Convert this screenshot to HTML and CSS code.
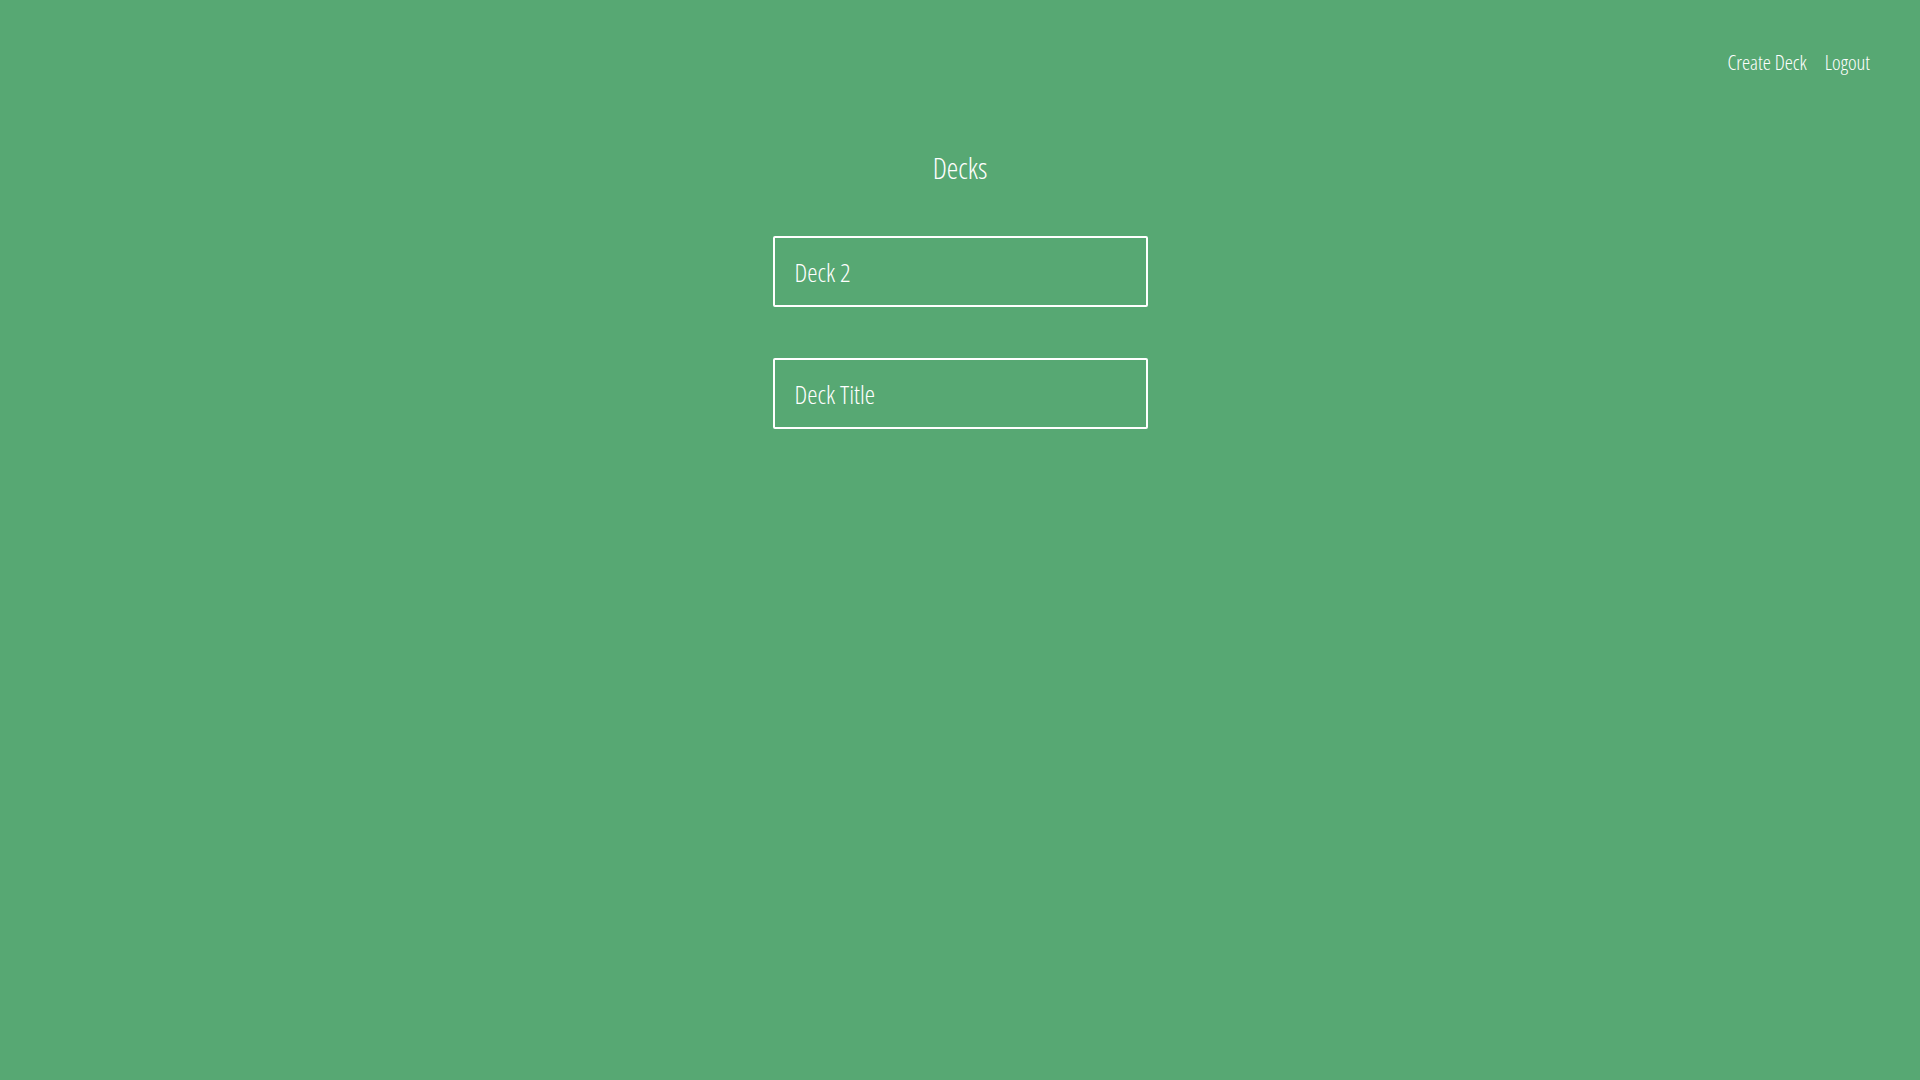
FILE: index.html
```html
<!DOCTYPE html>
<html>
<head>
<meta charset="utf-8">
<link rel="stylesheet" href="styles.css">
<title>Decks</title>
</head>
<body>
<nav class="nav">
  <a class="nav-link" href="#">Create Deck</a>
  <a class="nav-link" href="#">Logout</a>
</nav>
<main class="main">
  <h1 class="title">Decks</h1>
  <ul class="deck-list">
    <li class="deck">Deck 2</li>
    <li class="deck">Deck Title</li>
  </ul>
</main>
</body>
</html>
```
FILE: styles.css
```css
html, body {
  margin: 0;
  padding: 0;
  height: 100%;
}
body {
  background: #57a873;
  color: #ffffff;
  font-family: "Open Sans", "Roboto Condensed", sans-serif;
  font-stretch: 75%;
  font-weight: 350;
}
.nav {
  display: flex;
  justify-content: flex-end;
  gap: 18px;
  padding: 48px 50px 0 0;
}
.nav-link {
  color: #ffffff;
  text-decoration: none;
  font-size: 20.6px;
  line-height: 28px;
}
.main {
  display: flex;
  flex-direction: column;
  align-items: center;
}
.title {
  margin: 74px 0 0;
  font-size: 29px;
  font-weight: 350;
  line-height: 36px;
}
.deck-list {
  list-style: none;
  margin: 50px 0 0;
  padding: 0;
  display: flex;
  flex-direction: column;
  gap: 51px;
}
.deck {
  box-sizing: border-box;
  width: 375px;
  height: 71px;
  border: 2px solid #ffffff;
  border-radius: 2px;
  padding: 0 20px;
  display: flex;
  align-items: center;
  font-size: 26px;
}
```
